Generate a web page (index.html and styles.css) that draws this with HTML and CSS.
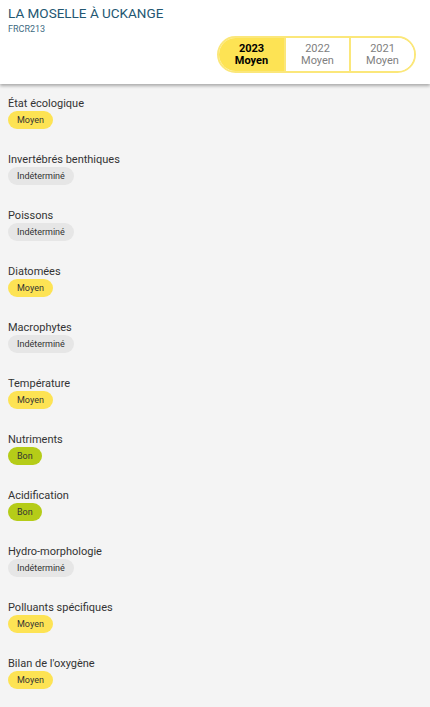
FILE: index.html
```html
<!DOCTYPE html>
<html lang="fr">
<head>
  <meta charset="UTF-8">
  <meta name="viewport" content="width=device-width, initial-scale=1.0">
  <title>La Moselle à Uckange</title>
  <link rel="stylesheet" href="styles.css">
</head>
<body>
  <!-- En-tête de la station -->
  <header class="header">
    <h1 class="title">LA MOSELLE À UCKANGE</h1>
    <div class="code">FRCR213</div>
    <div class="years">
      <button class="year active">2023<br>Moyen</button>
      <button class="year">2022<br>Moyen</button>
      <button class="year">2021<br>Moyen</button>
    </div>
  </header>

  <!-- Liste des paramètres -->
  <ul class="list">
    <li class="item"><div class="label">État écologique</div><span class="badge moyen">Moyen</span></li>
    <li class="item"><div class="label">Invertébrés benthiques</div><span class="badge indet">Indéterminé</span></li>
    <li class="item"><div class="label">Poissons</div><span class="badge indet">Indéterminé</span></li>
    <li class="item"><div class="label">Diatomées</div><span class="badge moyen">Moyen</span></li>
    <li class="item"><div class="label">Macrophytes</div><span class="badge indet">Indéterminé</span></li>
    <li class="item"><div class="label">Température</div><span class="badge moyen">Moyen</span></li>
    <li class="item"><div class="label">Nutriments</div><span class="badge bon">Bon</span></li>
    <li class="item"><div class="label">Acidification</div><span class="badge bon">Bon</span></li>
    <li class="item"><div class="label">Hydro-morphologie</div><span class="badge indet">Indéterminé</span></li>
    <li class="item"><div class="label">Polluants spécifiques</div><span class="badge moyen">Moyen</span></li>
    <li class="item"><div class="label">Bilan de l'oxygène</div><span class="badge moyen">Moyen</span></li>
  </ul>
</body>
</html>
```

FILE: styles.css
```css
body {
  margin: 0;
  font-family: Roboto, Arial, sans-serif;
  background: #f4f4f4;
  color: #333;
}
.header {
  background: white;
  padding: 5px 14px 11px 8px;
  box-shadow: 0 2px 3px rgba(0, 0, 0, 0.3);
  display: flex;
  flex-direction: column;
}
.title {
  margin: 0;
  font-size: 13.5px;
  font-weight: normal;
  line-height: 16px;
  color: #235772;
}
.code {
  margin-top: 2px;
  font-size: 9px;
  line-height: 12px;
  color: #3e6b82;
}
.years {
  align-self: flex-end;
  display: flex;
  margin-top: 1px;
  border: 2px solid #fbe77a;
  border-radius: 19px;
  overflow: hidden;
}
.year {
  width: 65px;
  height: 33px;
  padding: 0;
  border: none;
  border-left: 2px solid #fbe77a;
  background: white;
  color: #808080;
  font-family: Roboto, Arial, sans-serif;
  font-size: 11px;
  line-height: 12px;
}
.year:first-child {
  border-left: none;
}
.year.active {
  background: #fde354;
  color: black;
  font-weight: bold;
}
.list {
  list-style: none;
  margin: 0;
  padding: 13px 8px 0;
}
.item {
  height: 56px;
  display: flex;
  flex-direction: column;
  align-items: flex-start;
}
.label {
  font-size: 11px;
  line-height: 14px;
}
.badge {
  height: 18px;
  line-height: 18px;
  padding: 0 9px;
  border-radius: 9px;
  font-size: 9px;
  color: #333;
}
.moyen {
  background: #fde354;
}
.indet {
  background: #e6e6e6;
}
.bon {
  background: #b5cc18;
}
```
